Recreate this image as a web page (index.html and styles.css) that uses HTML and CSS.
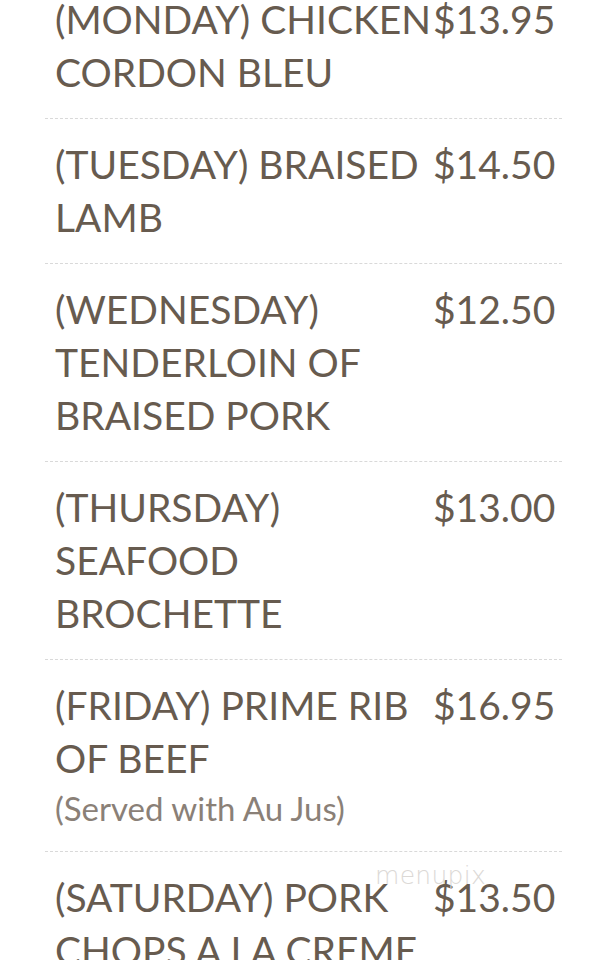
FILE: index.html
```html
<!DOCTYPE html>
<html>
<head>
<meta charset="utf-8">
<link rel="stylesheet" href="styles.css">
</head>
<body>
<div class="menu">
  <div class="item">
    <div class="name">(MONDAY) CHICKEN CORDON BLEU</div>
    <div class="price">$13.95</div>
  </div>
  <div class="item">
    <div class="name">(TUESDAY) BRAISED LAMB</div>
    <div class="price">$14.50</div>
  </div>
  <div class="item">
    <div class="name">(WEDNESDAY) TENDERLOIN OF BRAISED PORK</div>
    <div class="price">$12.50</div>
  </div>
  <div class="item">
    <div class="name">(THURSDAY) SEAFOOD BROCHETTE</div>
    <div class="price">$13.00</div>
  </div>
  <div class="item">
    <div class="name">(FRIDAY) PRIME RIB OF BEEF<div class="note">(Served with Au Jus)</div></div>
    <div class="price">$16.95</div>
  </div>
  <div class="item">
    <div class="name">(SATURDAY) PORK CHOPS A LA CREME</div>
    <div class="price">$13.50</div>
    <span class="watermark">menupix</span>
  </div>
</div>
</body>
</html>
```

FILE: styles.css
```css
html, body {
  margin: 0;
  padding: 0;
  background: #ffffff;
}
body {
  width: 608px;
  height: 960px;
  overflow: hidden;
  font-family: Lato, "Open Sans", sans-serif;
  color: #675b4f;
}
.menu {
  margin: -26px 46px 0 45px;
}
.item {
  position: relative;
  display: grid;
  grid-template-columns: 378px 1fr;
  padding: 19px 0 19px 10px;
  border-bottom: 1px dashed #d9d9d9;
  font-size: 39px;
  line-height: 53px;
}
.price {
  white-space: nowrap;
}
.note {
  font-size: 33px;
  line-height: 47px;
  color: #8a8077;
}
.watermark {
  position: absolute;
  left: 330px;
  top: 12px;
  font-family: "DejaVu Sans", sans-serif;
  font-weight: 300;
  font-size: 25px;
  line-height: 24px;
  color: #dcd9d6;
  letter-spacing: 0.3px;
}
```
